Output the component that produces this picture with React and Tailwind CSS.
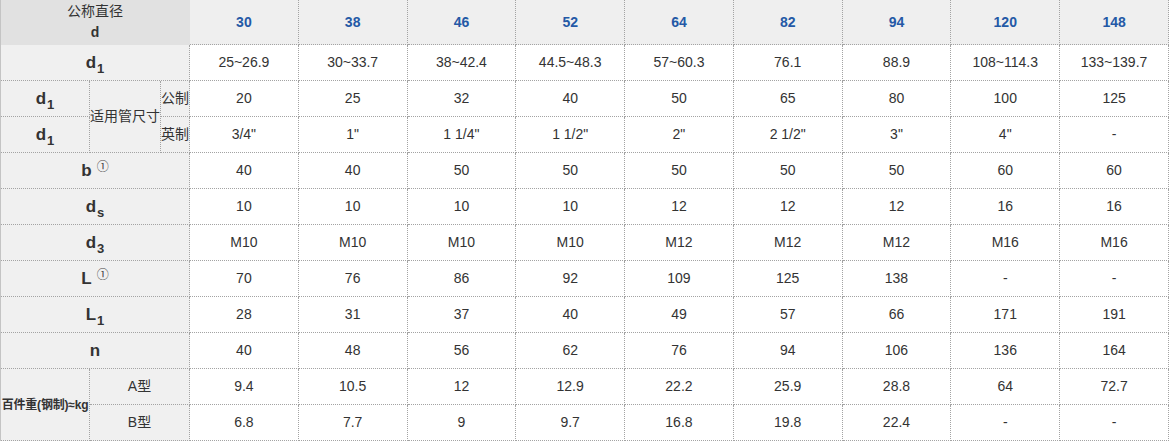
import React from "react";

const heads = ["30", "38", "46", "52", "64", "82", "94", "120", "148"];
const d1 = ["25~26.9", "30~33.7", "38~42.4", "44.5~48.3", "57~60.3", "76.1", "88.9", "108~114.3", "133~139.7"];
const gz = ["20", "25", "32", "40", "50", "65", "80", "100", "125"];
const yz = ['3/4"', '1"', '1 1/4"', '1 1/2"', '2"', '2 1/2"', '3"', '4"', "-"];
const b = ["40", "40", "50", "50", "50", "50", "50", "60", "60"];
const ds = ["10", "10", "10", "10", "12", "12", "12", "16", "16"];
const d3 = ["M10", "M10", "M10", "M10", "M12", "M12", "M12", "M16", "M16"];
const L = ["70", "76", "86", "92", "109", "125", "138", "-", "-"];
const L1 = ["28", "31", "37", "40", "49", "57", "66", "171", "191"];
const n = ["40", "48", "56", "62", "76", "94", "106", "136", "164"];
const A = ["9.4", "10.5", "12", "12.9", "22.2", "25.9", "28.8", "64", "72.7"];
const B = ["6.8", "7.7", "9", "9.7", "16.8", "19.8", "22.4", "-", "-"];

const cell = "border-r border-b border-dotted border-[#a3a3a3] text-center align-middle p-0";
const lab = cell + " bg-[#f0f0f0]";
const dat = cell + " bg-white text-[14px] text-[#333]";

function Sym({ s, sub, sup }) {
  return (
    <span className="text-[17px] font-bold text-[#333] leading-none">
      {s}
      {sub && <span className="text-[13px] font-bold relative top-[5px] ml-[1px]">{sub}</span>}
      {sup && <span className="text-[12px] font-normal text-[#444] ml-[5px] relative top-[-5px]">①</span>}
    </span>
  );
}

function Cells({ data }) {
  return data.map((v, i) => (
    <td key={i} className={dat}>
      {v}
    </td>
  ));
}

export default function App() {
  return (
    <div
      className="w-[1169px] h-[442px] bg-white overflow-hidden"
      style={{ fontFamily: '"Liberation Sans", Arial, "Noto Sans CJK SC", sans-serif' }}
    >
      <div className="border-l border-[#c4c4c4] w-[1169px]">
        <table className="table-fixed border-separate border-spacing-0 w-[1168px]">
          <colgroup>
            <col className="w-[89px]" />
            <col className="w-[71px]" />
            <col className="w-[29px]" />
            {heads.map((h) => (
              <col key={h} />
            ))}
          </colgroup>
          <tbody>
            <tr className="h-[45px]">
              <td colSpan={3} className="p-0 text-center align-middle bg-[#e1e1e1] border-r border-b border-solid border-[#e1e1e1] text-[14px] text-[#333] leading-[21px]">
                <div>公称直径</div>
                <div className="font-bold">d</div>
              </td>
              {heads.map((h) => (
                <td key={h} className={cell + " bg-[#efefef] text-[14px] font-bold text-[#2459a6]"}>
                  {h}
                </td>
              ))}
            </tr>
            <tr className="h-[36px]">
              <td colSpan={3} className={lab}>
                <Sym s="d" sub="1" />
              </td>
              <Cells data={d1} />
            </tr>
            <tr className="h-[36px]">
              <td className={lab}>
                <Sym s="d" sub="1" />
              </td>
              <td rowSpan={2} className={lab + " text-[14px] text-[#333]"}>
                适用管尺寸
              </td>
              <td className={lab + " text-[14px] text-[#333] whitespace-nowrap"}>公制</td>
              <Cells data={gz} />
            </tr>
            <tr className="h-[36px]">
              <td className={lab}>
                <Sym s="d" sub="1" />
              </td>
              <td className={lab + " text-[14px] text-[#333] whitespace-nowrap"}>英制</td>
              <Cells data={yz} />
            </tr>
            <tr className="h-[36px]">
              <td colSpan={3} className={lab}>
                <Sym s="b" sup />
              </td>
              <Cells data={b} />
            </tr>
            <tr className="h-[36px]">
              <td colSpan={3} className={lab}>
                <Sym s="d" sub="s" />
              </td>
              <Cells data={ds} />
            </tr>
            <tr className="h-[36px]">
              <td colSpan={3} className={lab}>
                <Sym s="d" sub="3" />
              </td>
              <Cells data={d3} />
            </tr>
            <tr className="h-[36px]">
              <td colSpan={3} className={lab}>
                <Sym s="L" sup />
              </td>
              <Cells data={L} />
            </tr>
            <tr className="h-[36px]">
              <td colSpan={3} className={lab}>
                <Sym s="L" sub="1" />
              </td>
              <Cells data={L1} />
            </tr>
            <tr className="h-[36px]">
              <td colSpan={3} className={lab}>
                <Sym s="n" />
              </td>
              <Cells data={n} />
            </tr>
            <tr className="h-[36px]">
              <td rowSpan={2} className={lab + " text-[12px] font-bold text-[#333] whitespace-nowrap tracking-[-0.2px]"}>
                百件重(钢制)≈kg
              </td>
              <td colSpan={2} className={lab + " text-[14px] text-[#333]"}>
                A型
              </td>
              <Cells data={A} />
            </tr>
            <tr className="h-[36px]">
              <td colSpan={2} className={lab + " text-[14px] text-[#333]"}>
                B型
              </td>
              <Cells data={B} />
            </tr>
          </tbody>
        </table>
      </div>
    </div>
  );
}
